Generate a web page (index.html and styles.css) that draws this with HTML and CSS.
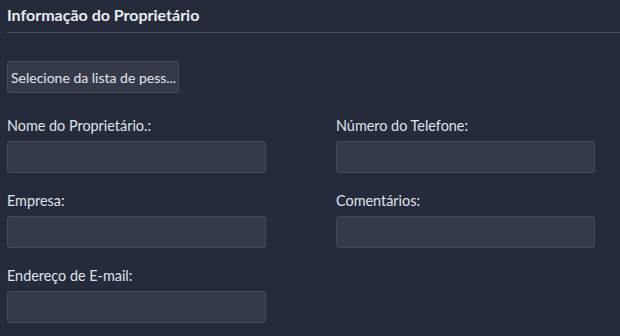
FILE: index.html
```html
<!DOCTYPE html>
<html lang="pt">
<head>
    <meta charset="UTF-8">
    <meta name="viewport" content="width=device-width, initial-scale=1.0">
    <title>Informação do Proprietário</title>
    <link rel="stylesheet" href="styles.css">
</head>
<body>
    <section class="owner-panel">
        <header class="panel-header">
            <h2>Informação do Proprietário</h2>
        </header>

        <button type="button" class="pick-button">Selecione da lista de pess...</button>

        <form class="owner-form">
            <div class="field">
                <label for="owner-name">Nome do Proprietário.:</label>
                <input type="text" id="owner-name" name="owner-name">
            </div>
            <div class="field">
                <label for="phone">Número do Telefone:</label>
                <input type="text" id="phone" name="phone">
            </div>
            <div class="field">
                <label for="company">Empresa:</label>
                <input type="text" id="company" name="company">
            </div>
            <div class="field">
                <label for="comments">Comentários:</label>
                <input type="text" id="comments" name="comments">
            </div>
            <div class="field">
                <label for="email">Endereço de E-mail:</label>
                <input type="text" id="email" name="email">
            </div>
        </form>
    </section>
</body>
</html>
```

FILE: styles.css
```css
body {
    font-family: Lato, "Open Sans", sans-serif;
    background-color: #262b3b;
    color: #dfe2ea;
    margin: 0;
    padding: 0;
}

.owner-panel {
    padding-left: 7px;
}

.panel-header {
    padding: 5px 0 7px;
    border-bottom: 1px solid #4a4f5e;
}

.panel-header h2 {
    margin: 0;
    font-size: 16px;
    line-height: 20px;
    font-weight: bold;
    color: #e9eaef;
}

.pick-button {
    display: block;
    width: 172px;
    height: 32px;
    margin-top: 28px;
    padding: 0 3px;
    background-color: #353a4a;
    border: 1px solid #474c5b;
    border-radius: 3px;
    color: #e3e5ec;
    font-family: inherit;
    font-size: 14px;
    text-align: left;
    white-space: nowrap;
    cursor: pointer;
}

.owner-form {
    display: grid;
    grid-template-columns: 259px 259px;
    column-gap: 70px;
    row-gap: 19px;
    margin-top: 24px;
}

.field label {
    display: block;
    font-size: 14.4px;
    line-height: 18px;
    margin-bottom: 6px;
}

.field input {
    display: block;
    width: 100%;
    height: 32px;
    box-sizing: border-box;
    background-color: #353a4a;
    border: 1px solid #464b5a;
    border-radius: 3px;
    color: #dfe2ea;
    font-family: inherit;
    font-size: 14px;
    padding: 0 6px;
}
```
